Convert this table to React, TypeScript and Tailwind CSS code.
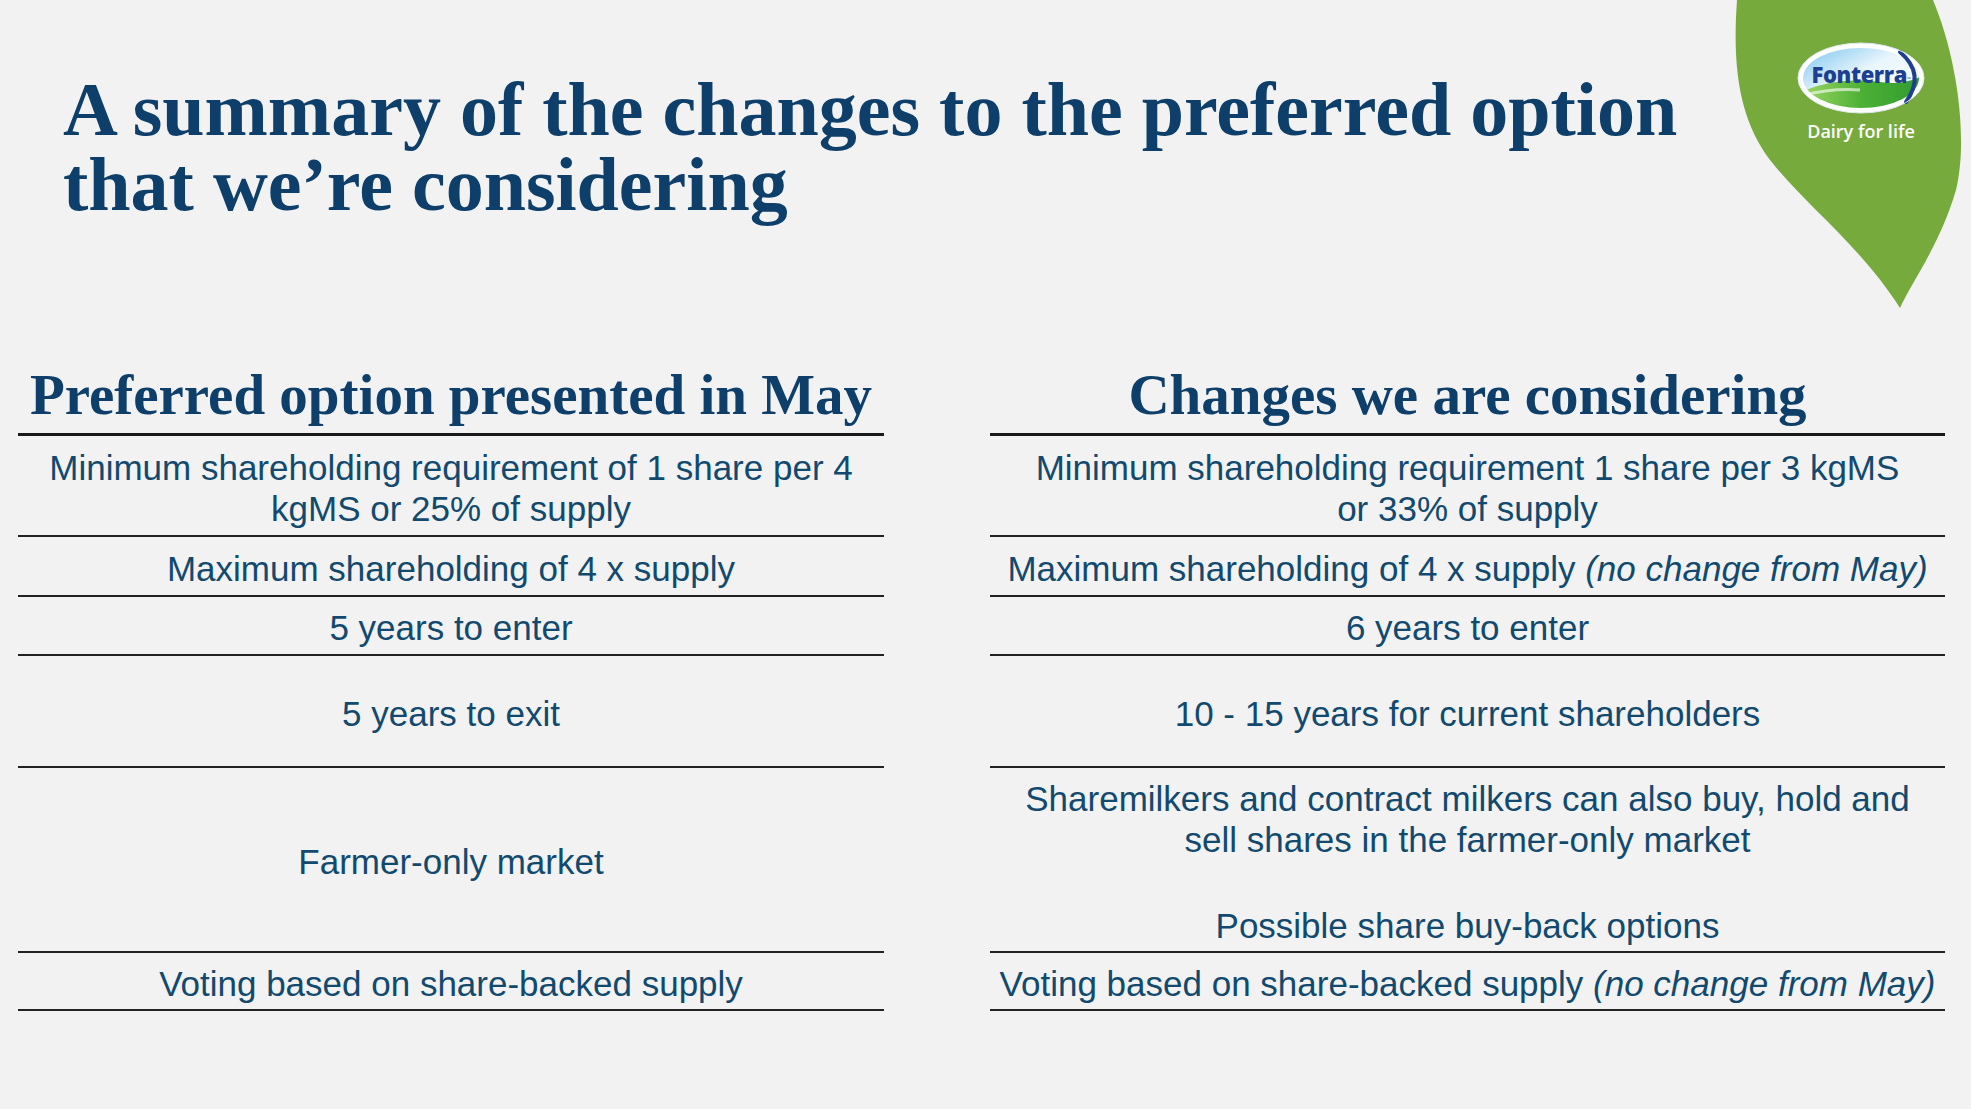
import React from "react";

const navy = "text-[#0d3f6a]";
const body = "text-[#124a6f]";

function Leaf() {
  return (
    <div className="absolute left-[1720px] top-0 w-[251px] h-[320px]">
      <svg width="251" height="320" viewBox="0 0 251 320" className="absolute left-0 top-0">
        <defs>
          <linearGradient id="sky" x1="0" y1="0" x2="1" y2="1">
            <stop offset="0" stopColor="#7cc4ee" />
            <stop offset="0.45" stopColor="#e9f6fd" />
            <stop offset="1" stopColor="#ffffff" />
          </linearGradient>
          <linearGradient id="grass" x1="0" y1="0" x2="1" y2="0">
            <stop offset="0" stopColor="#9fd866" />
            <stop offset="0.5" stopColor="#4cb035" />
            <stop offset="1" stopColor="#2f9a30" />
          </linearGradient>
          <clipPath id="inner">
            <ellipse cx="141" cy="78" rx="58" ry="30" />
          </clipPath>
        </defs>
        <path
          d="M17,0 C12,70 20,120 50,160 C85,205 140,245 180,308 C190,285 220,245 236,190 C248,140 238,60 213,0 Z"
          fill="#77aa3c"
        />
        <ellipse cx="141" cy="78" rx="63" ry="35" fill="#ffffff" />
        <ellipse cx="141" cy="78" rx="58" ry="30" fill="url(#sky)" />
        <g clipPath="url(#inner)">
          <path d="M80,92 Q120,76 160,82 Q185,86 205,74 L205,115 L80,115 Z" fill="url(#grass)" />
          <path d="M80,96 Q110,88 140,90" stroke="#ffffff" strokeWidth="3" fill="none" opacity="0.6" />
        </g>
        <path d="M180,52 Q206,74 186,102" stroke="#1f3f8f" strokeWidth="4" fill="none" strokeLinecap="round" />
        <ellipse cx="141" cy="78" rx="63" ry="35" fill="none" stroke="#dfe9f2" strokeWidth="1" />
      </svg>
      <span
        className="absolute left-[141px] top-[61px] -translate-x-1/2 whitespace-nowrap text-[22px] font-extrabold leading-[26px] text-[#1d3f91] tracking-[-0.4px]"
        style={{ fontFamily: '"Open Sans", "Noto Sans", sans-serif' }}
      >
        Fonterra
        <sup className="text-[5px] font-normal">™</sup>
      </span>
      <span
        className="absolute left-[141px] top-[118px] -translate-x-1/2 whitespace-nowrap text-[18px] font-semibold leading-[26px] text-white"
        style={{ fontFamily: '"Open Sans", "Noto Sans", sans-serif' }}
      >
        Dairy for life
      </span>
    </div>
  );
}

type Cell = React.ReactNode;

const left: Cell[] = [
  <>Minimum shareholding requirement of 1 share per 4<br />kgMS or 25% of supply</>,
  <>Maximum shareholding of 4 x supply</>,
  <>5 years to enter</>,
  <>5 years to exit</>,
  <>Farmer-only market</>,
  <>Voting based on share-backed supply</>,
];

const right: Cell[] = [
  <>Minimum shareholding requirement 1 share per 3 kgMS<br />or 33% of supply</>,
  <>Maximum shareholding of 4 x supply <i>(no change from May)</i></>,
  <>6 years to enter</>,
  <>10 - 15 years for current shareholders</>,
  <>
    Sharemilkers and contract milkers can also buy, hold and
    <br />
    sell shares in the farmer-only market
    <br />
    <span className="block h-[44px]" />
    Possible share buy-back options
  </>,
  <>Voting based on share-backed supply <i>(no change from May)</i></>,
];

const heights = ["h-[101px]", "h-[60px]", "h-[59px]", "h-[112px]", "h-[185px]", "h-[58px]"];

function Column({ title, cells, width }: { title: string; cells: Cell[]; width: string }) {
  return (
    <div className={`${width} flex flex-col`}>
      <div className="h-[80px] flex items-center justify-center border-b-[3px] border-[#1a1a1a]">
        <span
          className={`${navy} text-[57px] font-bold leading-none whitespace-nowrap`}
          style={{ fontFamily: '"Liberation Serif", "Times New Roman", serif' }}
        >
          {title}
        </span>
      </div>
      {cells.map((c, i) => (
        <div
          key={i}
          className={`${heights[i]} flex items-center justify-center border-b-2 border-[#222222] pt-[5px] text-center`}
        >
          <div className={`${body} text-[35px] leading-[41.5px] whitespace-nowrap`}>{c}</div>
        </div>
      ))}
    </div>
  );
}

export default function App() {
  return (
    <div
      className="relative w-[1971px] h-[1109px] overflow-hidden bg-[#f2f2f2]"
      style={{ fontFamily: '"Liberation Sans", Arial, sans-serif' }}
    >
      <Leaf />
      <div className="pl-[63px] pt-[72px]">
        <h1
          className={`${navy} text-[76px] font-bold whitespace-nowrap`}
          style={{ fontFamily: '"Liberation Serif", "Times New Roman", serif' }}
        >
          <div className="h-[75px] leading-[75px]">A summary of the changes to the preferred option</div>
          <div className="h-[75px] leading-[75px]">that we’re considering</div>
        </h1>
      </div>
      <div className="mt-[134px] flex pl-[18px] gap-[106px]">
        <Column title="Preferred option presented in May" cells={left} width="w-[866px]" />
        <Column title="Changes we are considering" cells={right} width="w-[955px]" />
      </div>
    </div>
  );
}
